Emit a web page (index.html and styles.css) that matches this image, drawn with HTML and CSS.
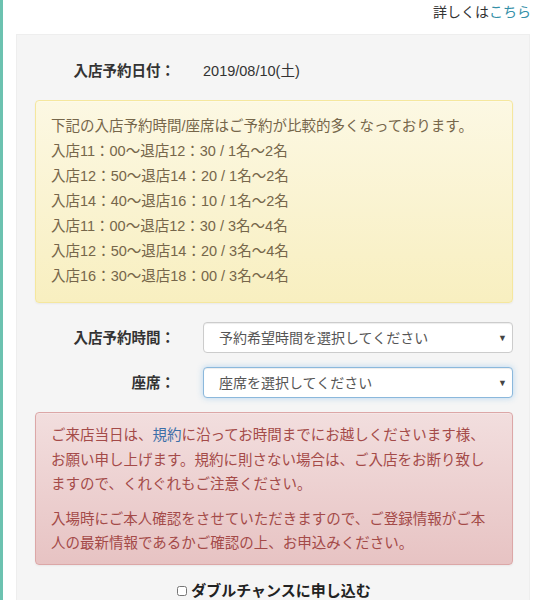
FILE: index.html
```html
<!DOCTYPE html>
<html lang="ja">
<head>
  <meta charset="UTF-8" />
  <meta name="viewport" content="width=device-width, initial-scale=1.0" />
  <title>入店予約</title>
  <link rel="stylesheet" href="styles.css">
</head>
<body>
  <div class="page">
    <div class="more">詳しくは<a href="#">こちら</a></div>

    <div class="panel">
      <div class="form-row">
        <div class="label">入店予約日付：</div>
        <div class="value">2019/08/10(土)</div>
      </div>

      <div class="alert alert-warning">
        <p>下記の入店予約時間/座席はご予約が比較的多くなっております。</p>
        <p>入店11：00～退店12：30 / 1名～2名</p>
        <p>入店12：50～退店14：20 / 1名～2名</p>
        <p>入店14：40～退店16：10 / 1名～2名</p>
        <p>入店11：00～退店12：30 / 3名～4名</p>
        <p>入店12：50～退店14：20 / 3名～4名</p>
        <p>入店16：30～退店18：00 / 3名～4名</p>
      </div>

      <div class="form-row select-row">
        <label class="label" for="time">入店予約時間：</label>
        <div class="select-wrap">
          <select id="time" class="select">
            <option>予約希望時間を選択してください</option>
          </select>
          <span class="arrow">&#9660;</span>
        </div>
      </div>

      <div class="form-row select-row">
        <label class="label" for="seat">座席：</label>
        <div class="select-wrap">
          <select id="seat" class="select focus">
            <option>座席を選択してください</option>
          </select>
          <span class="arrow">&#9660;</span>
        </div>
      </div>

      <div class="alert alert-danger">
        <p>ご来店当日は、<a href="#">規約</a>に沿ってお時間までにお越しくださいます様、お願い申し上げます。規約に則さない場合は、ご入店をお断り致しますので、くれぐれもご注意ください。</p>
        <p>入場時にご本人確認をさせていただきますので、ご登録情報がご本人の最新情報であるかご確認の上、お申込みください。</p>
      </div>

      <label class="double">
        <input type="checkbox" />
        <span>ダブルチャンスに申し込む</span>
      </label>
    </div>
  </div>
</body>
</html>
```

FILE: styles.css
```css
body {
  margin: 0;
  font-family: "Liberation Sans", "Noto Sans CJK JP", sans-serif;
  font-size: 14.5px;
  color: #333;
  background: #fff;
}

.page {
  min-height: 100vh;
  border-left: 3px solid #6cc2b0;
  padding: 0 8px 0 13px;
  box-sizing: border-box;
}

.more {
  height: 34px;
  box-sizing: border-box;
  padding-top: 2px;
  line-height: 20px;
  text-align: right;
  margin-right: -1px;
  font-size: 14px;
}

.more a {
  color: #3590a8;
  text-decoration: none;
}

.panel {
  background: #f5f5f5;
  border: 1px solid #eeeeee;
  padding: 24px 16px 0 18px;
  height: 700px;
}

.form-row {
  display: grid;
  grid-template-columns: 140px 1fr;
  column-gap: 28px;
  align-items: center;
  line-height: 24px;
}

.label {
  text-align: right;
  font-weight: bold;
  color: #333;
}

.alert {
  border: 1px solid transparent;
  border-radius: 4px;
  padding: 13px 15px;
  box-shadow: inset 0 1px 0 rgba(255, 255, 255, 0.25), 0 1px 2px rgba(0, 0, 0, 0.05);
}

.alert p {
  margin: 0;
  line-height: 25px;
}

.alert-warning {
  margin-top: 17px;
  background: linear-gradient(to bottom, #fcf8e3 0%, #f8efc0 100%);
  border-color: #f5e79e;
  color: #76664a;
}

.select-row {
  margin-top: 19px;
}

.select-row + .select-row {
  margin-top: 14px;
}

.select-wrap {
  position: relative;
}

.select {
  display: block;
  width: 100%;
  height: 31px;
  padding: 0 30px 0 15px;
  font-family: inherit;
  font-size: 14px;
  color: #555;
  background: #fff;
  border: 1px solid #ccc;
  border-radius: 4px;
  box-shadow: inset 0 1px 1px rgba(0, 0, 0, 0.075);
  -webkit-appearance: none;
  appearance: none;
  outline: none;
}

.select.focus {
  border-color: #8bb8dc;
  box-shadow: inset 0 1px 1px rgba(0, 0, 0, 0.075), 0 0 6px rgba(102, 175, 233, 0.45);
}

.arrow {
  position: absolute;
  right: 6px;
  top: 50%;
  transform: translateY(-50%);
  font-size: 9px;
  line-height: 9px;
  color: #444;
  pointer-events: none;
}

.alert-danger {
  margin-top: 14px;
  padding: 10px 15px 8px;
  background: linear-gradient(to bottom, #f2dede 0%, #e7c3c3 100%);
  border-color: #dca7a7;
  color: #a44a48;
}

.alert-danger p {
  line-height: 24.5px;
}

.alert-danger p + p {
  margin-top: 10px;
}

.alert-danger a {
  color: #3c6ea8;
  text-decoration: none;
}

.double {
  display: flex;
  justify-content: center;
  align-items: center;
  gap: 4px;
  margin-top: 16px;
  font-weight: bold;
  font-size: 15px;
  line-height: 20px;
  color: #222;
}

.double input {
  width: 10px;
  height: 10px;
  margin: 0;
}
```
